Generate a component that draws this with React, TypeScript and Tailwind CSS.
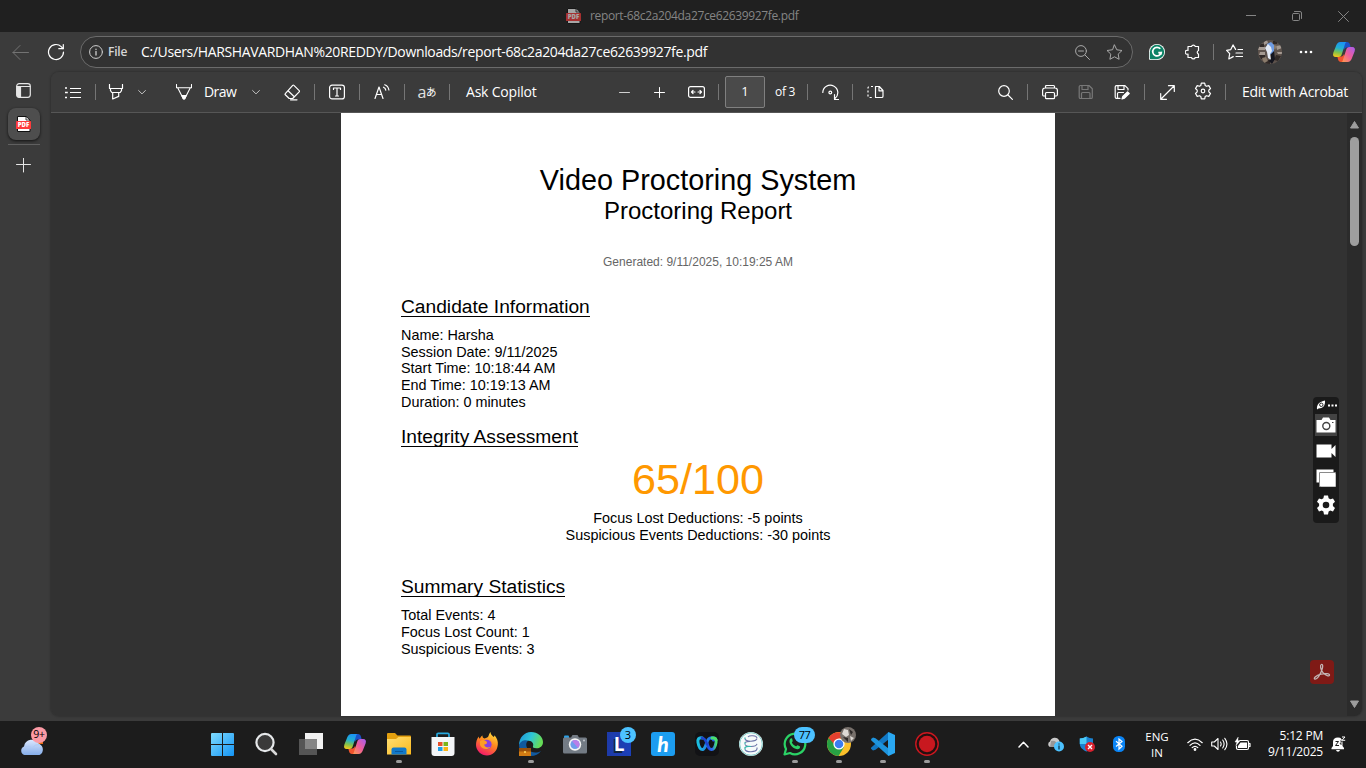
import React from "react";

type SvgProps = { w?: number; h?: number; className?: string; sw?: number; children: React.ReactNode };

function Glyph({ w = 16, h, className = "", sw = 1, children }: SvgProps) {
  const hh = h ?? w;
  return (
    <svg
      width={w}
      height={hh}
      viewBox={`0 0 ${w} ${hh}`}
      fill="none"
      stroke="currentColor"
      strokeWidth={sw}
      strokeLinecap="round"
      strokeLinejoin="round"
      className={`shrink-0 ${className}`}
    >
      {children}
    </svg>
  );
}

function Cell({ className, children }: { className: string; children?: React.ReactNode }) {
  return <div className={`flex h-full shrink-0 items-center justify-center ${className}`}>{children}</div>;
}

function Sep({ className = "" }: { className?: string }) {
  return <div className={`h-4 w-px shrink-0 bg-[#757575] ${className}`} />;
}

function PdfIcon({ dim = false }: { dim?: boolean }) {
  return (
    <svg width="16" height="16" viewBox="0 0 16 16" className={dim ? "shrink-0 opacity-60" : "shrink-0"}>
      <path d="M1.500.5h8.800L14 4v11.500H1.500z" fill="#fff" stroke="#111" />
      <path d="M10 .5V4h4z" fill="#fff" stroke="#111" strokeWidth=".8" />
      <rect x="0" y="5" width="15" height="8" rx=".6" fill="#ff3b3b" />
      <text x="7.500" y="11.200" fontSize="6" fontWeight="800" textAnchor="middle" fill="#fff" fontFamily="Open Sans, sans-serif">
        PDF
      </text>
    </svg>
  );
}

function Chevron() {
  return (
    <Glyph w={8} className="text-[#c4c4c4]">
      <path d="M.6 2.500 4 5.900l3.400-3.400" />
    </Glyph>
  );
}

function CopilotLogo({ size = 24, id }: { size?: number; id: string }) {
  return (
    <svg width={size} height={size} viewBox="0 0 24 24" className="shrink-0">
      <defs>
        <linearGradient id={`${id}a`} x1=".5" y1="0" x2=".3" y2="1">
          <stop offset="0" stopColor="#1b93f5" />
          <stop offset=".4" stopColor="#22b0d0" />
          <stop offset=".7" stopColor="#7fc24c" />
          <stop offset="1" stopColor="#f3c81b" />
        </linearGradient>
        <linearGradient id={`${id}b`} x1="1" y1="0" x2="0" y2="1">
          <stop offset="0" stopColor="#a45cf2" />
          <stop offset=".5" stopColor="#ee5d9a" />
          <stop offset="1" stopColor="#ffa04a" />
        </linearGradient>
      </defs>
      <path d="M15 2c1.600 0 2.500 1 3 2.800l.7 2.700h-3c-2 0-3 .5-3.700 2.500L10 4c-.4-1.200-.9-2-2-2z" fill="#1a50c8" />
      <path d="M9 22c-1.600 0-2.500-1-3-2.800l-.7-2.700h3c2 0 3-.5 3.700-2.500l2 6c.4 1.200.9 2 2 2z" fill="#f2542d" />
      <path d="M14.500 2H8.500C6 2 4.700 3.800 3.700 6.700L1.400 12.500C.4 15.500 1.500 17 3.800 17h2.700c1.900 0 2.700-1 3.300-2.800l2.400-7.400C13 4.200 13.300 2 14.500 2z" fill={`url(#${id}a)`} />
      <path d="M9.500 22h6c2.500 0 3.800-1.800 4.800-4.700l2.300-5.800c1-3-.1-4.500-2.400-4.500h-2.700c-1.900 0-2.700 1-3.300 2.800l-2.400 7.400C11 19.800 10.700 22 9.500 22z" fill={`url(#${id}b)`} />
    </svg>
  );
}

function TitleBar() {
  return (
    <header className="flex h-8 shrink-0 items-center bg-[#202020]">
      <div className="flex min-w-0 flex-1 items-center gap-2 pl-[566px]">
        <PdfIcon dim />
        <span className="text-[12px] leading-4 tracking-[-0.35px] whitespace-nowrap text-[#858585]">report-68c2a204da27ce62639927fe.pdf</span>
      </div>
      <Cell className="w-[46px] text-[#858585]">
        <Glyph w={10}><path d="M0 4.500h10" /></Glyph>
      </Cell>
      <Cell className="w-[46px] text-[#858585]">
        <Glyph w={10}>
          <rect x=".5" y="2.500" width="7" height="7" rx="1" />
          <path d="M2.500.5h5.500a1.500 1.500 0 0 1 1.500 1.500v5.500" />
        </Glyph>
      </Cell>
      <Cell className="w-[46px] text-[#858585]">
        <Glyph w={11}><path d="m.5.5 10 10M10.500.5l-10 10" /></Glyph>
      </Cell>
    </header>
  );
}

function AddressRow() {
  return (
    <div className="flex h-10 shrink-0 items-center">
      <Cell className="w-10 text-[#737373]">
        <Glyph w={17}><path d="M16.500 8.500H1M8 1.500 1 8.500l7 7" /></Glyph>
      </Cell>
      <Cell className="w-8 text-white">
        <Glyph w={18} sw={1.200}>
          <path d="M16.500 9A7.500 7.500 0 1 1 14.200 3.600L16 5.500" />
          <path d="M16.300 1.500v4.200h-4.500" />
        </Glyph>
      </Cell>
      <div className="ml-2 flex h-8 w-[1053px] shrink-0 items-center rounded-full border border-[#6b6b6b] bg-[#323232] pl-2">
        <Glyph w={14} className="text-[#cfcfcf]">
          <circle cx="7" cy="7" r="6.400" />
          <path d="M7 6.500v3.500M7 4.200v.2" strokeWidth="1.300" />
        </Glyph>
        <span className="ml-[5px] w-[33px] text-[12px] font-semibold tracking-[-0.2px] text-[#d6d6d6]">File</span>
        <span className="flex-1 text-[14px] leading-5 tracking-[-0.355px] whitespace-nowrap text-white">
          C:/Users/HARSHAVARDHAN%20REDDY/Downloads/report-68c2a204da27ce62639927fe.pdf
        </span>
        <Glyph w={15} className="mr-4 text-[#a8a8a8]">
          <circle cx="6" cy="6" r="5.400" />
          <path d="m10 10 4.500 4.500M3.500 6h5" />
        </Glyph>
        <Glyph w={17} className="mr-[9px] text-[#a8a8a8]">
          <path d="m8.500 1 2.300 4.800 5.200.7-3.800 3.600.9 5.200-4.600-2.500-4.600 2.500.9-5.200L1 6.500l5.200-.7z" />
        </Glyph>
      </div>
      <Cell className="w-12">
        <svg width="16" height="16" viewBox="0 0 16 16">
          <path d="M8 0a8 8 0 1 1 0 16H1.500A1.500 1.500 0 0 1 0 14.500V8a8 8 0 0 1 8-8z" fill="#fff" />
          <path d="M8 .8a7.200 7.200 0 1 1 0 14.400H1.800a1 1 0 0 1-1-1V8A7.200 7.200 0 0 1 8 .8z" fill="#0b8265" />
          <path d="M11.300 4.800A4.300 4.300 0 1 0 12.200 8.700H9.300" fill="none" stroke="#fff" strokeWidth="1.700" />
          <path d="m9.800 10 2.800-2.600v3.400z" fill="#fff" />
        </svg>
      </Cell>
      <Cell className="w-6 text-white">
        <Glyph w={16} sw={1.200}>
          <path d="M5 2.500H6.500a2 2 0 0 1 3.800 0H13.500v4M5 2.500H3v3.900a2 2 0 1 0 0 3.700v3.400h3.500a1.900 1.900 0 0 0 3.700 0h3.300v-3.400a1.900 1.900 0 0 1 0-3.600" />
        </Glyph>
      </Cell>
      <Sep className="ml-2 bg-[#6a6a6a]" />
      <Cell className="w-10 text-white">
        <Glyph w={17} sw={1.200}>
          <path d="M9.600 5.400 7 .9 4.800 5.600l-4.200.7 3.100 3.400-.9 5.300 4.400-2.400M12 5.500h4.500M10 9h6.500M10 12.500h6.500" />
        </Glyph>
      </Cell>
      <Cell className="w-8">
        <svg width="24" height="24" viewBox="0 0 24 24">
          <defs><clipPath id="avatar"><circle cx="12" cy="12" r="12" /></clipPath></defs>
          <g clipPath="url(#avatar)">
            <path fill="#5d524c" d="M0 0h24v24H0z" />
            <path fill="#a59a92" d="M0 7h7v3H0zM2 12h5v3H1zM6 2l3-2 1 3-4 2zM18 6l6-1v3l-5 2zM19 12h5v2h-4z" />
            <path fill="#302927" d="M1 15h6v4H3zM18 15l5 1-3 5-4-1zM8 20h4v4H7zM2 4h4v3H2zM15 1h4v3h-4z" />
            <path fill="#8a7b6b" d="M4 18l4-1 2 4-4 2zM16 5l3 1-2 4-2-3z" />
            <path fill="#6f9be2" d="M9 4l4-2 3 3v7l-3 3-4-5z" />
            <path fill="#e4eaf5" d="m7 8 3-4 3 3 1 4-2 3 1 6-3-2-1-6z" />
            <path fill="#15161f" d="m13 14 3-3 1 8-3 5-3-3 2-2z" />
          </g>
        </svg>
      </Cell>
      <Cell className="w-10 text-white">
        <Glyph w={14} h={4}>
          <g fill="currentColor" stroke="none"><circle cx="2" cy="2" r="1.300" /><circle cx="7" cy="2" r="1.300" /><circle cx="12" cy="2" r="1.300" /></g>
        </Glyph>
      </Cell>
      <Cell className="w-9"><CopilotLogo id="top" size={24} /></Cell>
    </div>
  );
}

function PdfToolbar() {
  return (
    <div className="flex h-[41px] shrink-0 items-center border-b border-[#565656] bg-[#3b3b3b] text-white">
      <Cell className="w-11">
        <Glyph w={16} h={13} sw={1}>
          <path d="M5 2.500h11M5 6.500h11M5 11.500h11" strokeLinecap="butt" />
          <path d="M0 2h2M0 6.500h2M3 6.500h-.8M0 11.500h2" strokeLinecap="butt" strokeWidth="1.600" />
        </Glyph>
      </Cell>
      <Sep />
      <Cell className="w-10">
        <Glyph w={16} sw={1.200}>
          <path d="M1.500.5v4h13v-4M2.500 4.500v2.200l1.300 1.800h8.400l1.300-1.800V4.500M4.700 8.500v6.500l6-2.600V8.500" />
        </Glyph>
      </Cell>
      <Cell className="w-3"><Chevron /></Cell>
      <Cell className="ml-7 w-4">
        <Glyph w={16} sw={1.100}>
          <path d="M.5.5v3.300h15V.5M1.700 3.800l5.600 11h1.400l5.600-11" />
          <path d="M5.800 11.500h4.400L8.600 15H7.400z" fill="currentColor" />
        </Glyph>
      </Cell>
      <span className="ml-3 w-12 text-[14px] leading-5 tracking-[-0.55px]">Draw</span>
      <Cell className="w-2"><Chevron /></Cell>
      <Cell className="w-[54px] pl-[10px]">
        <Glyph w={17} sw={1.200}>
          <path d="m9.900 1.300 5.300 5.300q.6.600 0 1.200L8.700 14.500H5.200L1.300 10.800q-.6-.6 0-1.200l7.400-8.300q.6-.6 1.200 0zM4.300 7l6 5.700M6.500 15.800h6.500" />
        </Glyph>
      </Cell>
      <Sep />
      <Cell className="w-11">
        <Glyph w={16} sw={1.200}>
          <rect x=".6" y="1.100" width="14.800" height="13.800" rx="2.500" />
          <path d="M4.500 5.500v-1.500h7v1.500M8 4v8M6.500 12h3" />
        </Glyph>
      </Cell>
      <Sep />
      <Cell className="w-11">
        <Glyph w={16} sw={1.200}>
          <path d="M1 14.500 5 3l4 11.500M2.500 10.500h5M9.500 3.200q2 .8 2.300 3M10.700.8q3.500 1.200 4.200 5.200" />
        </Glyph>
      </Cell>
      <Sep />
      <Cell className="w-11">
        <span className="text-[16px] leading-4 tracking-[-0.5px] text-[#e0e0e0]">a</span>
        <span className="font-['Noto_Sans_CJK_JP',sans-serif] text-[10.500px] leading-4 text-white">あ</span>
      </Cell>
      <Sep />
      <span className="w-[158px] pl-4 text-[14px] leading-5 tracking-[-0.2px] whitespace-nowrap">Ask Copilot</span>
      <Cell className="w-8 text-[#d0d0d0]"><Glyph w={11}><path d="M.5 5.500h10" /></Glyph></Cell>
      <Cell className="w-[38px]"><Glyph w={11}><path d="M.5 5.500h10M5.500.5v10" /></Glyph></Cell>
      <Cell className="w-[37px]">
        <Glyph w={17} h={12} sw={1.200}>
          <rect x=".6" y=".6" width="15.800" height="10.800" rx="2" />
          <path d="M3.500 6h3.500M10 6h3.500M5 4.500 3.500 6 5 7.500M12 4.500 13.500 6 12 7.500" />
        </Glyph>
      </Cell>
      <Sep className="ml-[3px]" />
      <div className="ml-[6px] flex h-8 w-10 shrink-0 items-center justify-center rounded-[2px] border border-[#808080] bg-[#4a4a4a] text-[13px]">1</div>
      <span className="ml-[10px] w-8 text-[12px] tracking-[-0.3px] whitespace-nowrap">of 3</span>
      <Sep />
      <Cell className="w-11">
        <Glyph w={17} sw={1.200}>
          <path d="M1 8.500a7.300 7.300 0 1 1 11.500 5.500M12 10.500v4.500h4.300" className="hidden" />
          <path d="M1 9.500A7.500 7.500 0 1 1 13.500 14M11.500 15.500h4M13.500 11v4" className="hidden" />
          <path d="M.8 8.500a7.500 7.500 0 1 1 12.200 6M12.500 10.500v5h4.200" />
          <circle cx="8.300" cy="8.500" r="1.400" />
        </Glyph>
      </Cell>
      <Sep />
      <Cell className="w-11">
        <Glyph w={17} h={14} sw={1.200}>
          <path d="M8.500 1.500v11h6.200q1.300 0 1.300-1.300V5.500L12.300 1.500zM12 1.800v4h4" />
          <path d="M6 1.500H3Q1 1.500 1 3v8.500q0 1 2 1h3" strokeDasharray="2 2" strokeLinecap="butt" />
        </Glyph>
      </Cell>
      <div className="flex-1" />
      <Cell className="w-11">
        <Glyph w={15} sw={1.200}><circle cx="6" cy="6" r="5.300" /><path d="m10 10 4.400 4.400" /></Glyph>
      </Cell>
      <Sep />
      <Cell className="w-11">
        <Glyph w={16} sw={1.200}>
          <path d="M3.500 4V2.500q0-1 1-1h7q1 0 1 1V4M3.500 12H1.800Q.6 12 .6 10.500V6.500Q.6 4 3 4h10q2.400 0 2.400 2.500v4q0 1.500-1.200 1.500h-1.700" />
          <rect x="3.500" y="8.500" width="9" height="6.200" rx="1" />
        </Glyph>
      </Cell>
      <Cell className="w-7 text-[#787878]"><SaveGlyph /></Cell>
      <Cell className="w-11"><SaveGlyph pen /></Cell>
      <Sep />
      <Cell className="w-11">
        <Glyph w={15} sw={1.200}><path d="M14 1 1 14M8.500.7h5.800v5.800M.7 8.500v5.800h5.800" /></Glyph>
      </Cell>
      <Cell className="w-7">
        <Glyph w={18} sw={1.200} className="mb-0.5">
          <path d="M7.300 1.200h3.400l.5 2.300 1.300.8 2.300-.7 1.700 2.900-1.700 1.700v1.600l1.700 1.700-1.700 2.900-2.300-.7-1.300.8-.5 2.300H7.300l-.5-2.300-1.300-.8-2.300.7-1.700-2.900 1.700-1.700V8.200L1.500 6.500l1.700-2.900 2.300.7 1.300-.8z" />
          <circle cx="9" cy="9" r="1.800" />
        </Glyph>
      </Cell>
      <Sep className="ml-2" />
      <span className="ml-4 w-[120px] text-[14px] leading-5 tracking-[-0.3px] whitespace-nowrap">Edit with Acrobat</span>
    </div>
  );
}

function SaveGlyph({ pen = false }: { pen?: boolean }) {
  return (
    <Glyph w={16} sw={1.200}>
      {pen ? (
        <>
          <path d="M6 14.400H2.500q-1.300 0-1.300-1.300V2.900q0-1.300 1.300-1.300h8.500l3 3V6M4 1.800v3.700h6V1.800M3.500 14V9.500q0-1 1-1h5" />
          <path d="m8 15 .8-2.500 4.700-4.700 1.700 1.700-4.700 4.700z" fill="currentColor" />
        </>
      ) : (
        <path d="M2.500 1.500h8.500l3.300 3.200v8.500q0 1.300-1.300 1.300H2.500q-1.300 0-1.300-1.300V2.800q0-1.300 1.300-1.300zM4 1.500v4h6v-4M3.500 14.500v-5q0-1 1-1h6.500q1 0 1 1v5" />
      )}
    </Glyph>
  );
}

function SideTabs() {
  return (
    <aside className="flex w-[51px] shrink-0 flex-col pl-2">
      <div className="mt-[11px] flex w-[31px] justify-center text-[#e6e6e6]">
        <Glyph w={15} sw={1.200}>
          <rect x=".7" y=".7" width="13.600" height="13.600" rx="2.500" />
          <path d="M1 3.500h13" />
          <path d="M1 3.500h3.500v10.500H2.500Q1 14 1 12z" fill="currentColor" />
        </Glyph>
      </div>
      <div className="mt-[10px] flex size-8 items-center justify-center rounded-lg bg-[#4e4e4e] shadow-[0_1px_3px_rgba(0,0,0,0.7)]">
        <PdfIcon />
      </div>
      <div className="mt-1 h-px w-8 bg-[#606060]" />
      <div className="mt-[13px] flex w-[31px] justify-center text-[#e6e6e6]">
        <Glyph w={15}><path d="M.5 6.500h14M7.500 0v14" /></Glyph>
      </div>
    </aside>
  );
}

function ReportHeading({ children, className = "" }: { children: React.ReactNode; className?: string }) {
  return (
    <h2 className={`text-[19.2px] leading-[22px] ${className}`}>
      <span className="inline-block h-[21px] border-b border-black leading-[22px]">{children}</span>
    </h2>
  );
}

function ReportPage() {
  return (
    <article className="h-full w-[714px] shrink-0 bg-white px-[60px] pt-[50px] font-['Liberation_Sans',Arial,sans-serif] text-[14.4px] leading-[16.65px] text-black">
      <h1 className="h-[34px] text-center text-[28.8px] leading-[34px] whitespace-nowrap">Video Proctoring System</h1>
      <p className="text-center text-[24px] leading-7">Proctoring Report</p>
      <p className="mt-[30px] text-center text-[12px] leading-[14px] text-[#666666]">Generated: 9/11/2025, 10:19:25 AM</p>
      <ReportHeading className="mt-[27px] h-[22px]">Candidate Information</ReportHeading>
      <div className="mt-[9px] h-[84px]">
        <p>Name: Harsha</p>
        <p>Session Date: 9/11/2025</p>
        <p>Start Time: 10:18:44 AM</p>
        <p>End Time: 10:19:13 AM</p>
        <p>Duration: 0 minutes</p>
      </div>
      <ReportHeading className="mt-[15px] h-[22px]">Integrity Assessment</ReportHeading>
      <p className="mt-[6px] text-center text-[43.2px] leading-[50px] text-[#ff9800]">65/100</p>
      <div className="mt-[6px] h-[33px] text-center">
        <p>Focus Lost Deductions: -5 points</p>
        <p>Suspicious Events Deductions: -30 points</p>
      </div>
      <ReportHeading className="mt-[33px] h-[22px]">Summary Statistics</ReportHeading>
      <div className="mt-[9px] leading-[17px]">
        <p>Total Events: 4</p>
        <p>Focus Lost Count: 1</p>
        <p>Suspicious Events: 3</p>
      </div>
    </article>
  );
}

function CaptureWidget() {
  return (
    <div className="absolute top-[397px] left-[1313px] flex h-[126px] w-[26px] flex-col items-center rounded bg-[#1a1a1a] text-white">
      <div className="flex h-[17px] items-center gap-[2px] pb-px">
        <svg width="10" height="10" viewBox="0 0 10 10">
          <path d="M1 9.500C.3 4.500 3.500 1.500 9 .5 9.500 5.500 7 8.500 2.500 8.500z" fill="#fff" />
          <circle cx="5.300" cy="4.800" r="1.700" fill="none" stroke="#1a1a1a" strokeWidth=".9" />
        </svg>
        <svg width="9" height="3" viewBox="0 0 9 3" fill="#fff"><path d="M0 .5h2v2H0zM3.500.5h2v2h-2zM7 .5h2v2H7z" /></svg>
      </div>
      <div className="flex size-[22px] items-center justify-center bg-[#434343] pr-px pb-px">
        <svg width="20" height="16" viewBox="0 0 20 16">
          <path d="M.5 3h5l1.500-2.500h6L14.500 3h5v12.500H.5z" fill="#fff" />
          <circle cx="10.300" cy="9" r="3.500" fill="none" stroke="#434343" strokeWidth="1.400" />
          <path d="M16 5h1.500v1H16z" fill="#434343" />
        </svg>
      </div>
      <svg width="20" height="14" viewBox="0 0 20 14" fill="#fff" className="mt-2 mr-px">
        <path d="M.5.500h15v4.500L19.500 1v12l-4-4v4.500H.5z" />
      </svg>
      <svg width="20" height="18" viewBox="0 0 20 18" className="mt-[11px] mr-px">
        <path d="M.5.5h17v13H.5z" fill="#fff" />
        <path d="M3.500 3.500h16v14h-16z" fill="#fff" stroke="#8a8a8a" />
        <path d="M4.500 4.500h15v13h-15z" fill="#fff" />
      </svg>
      <svg width="20" height="20" viewBox="0 0 20 20" fill="#fff" className="mt-2 mr-px">
        <path fillRule="evenodd" d="M8 .5h4l.6 2.800 1.700 1 2.700-.9 2 3.400-2.100 1.900v2.200L19 12.900l-2 3.500-2.700-.9-1.700 1-.6 2.900H8l-.6-2.900-1.700-1-2.700.9-2-3.500 2.100-2V8.700L1 6.800l2-3.400 2.700.9 1.700-1zM10 6.700a3.300 3.300 0 1 0 0 6.600 3.300 3.300 0 0 0 0-6.600z" />
      </svg>
    </div>
  );
}

function Viewer() {
  return (
    <main className="relative flex min-h-0 flex-1 bg-[#323232]">
      <div className="w-[290px] shrink-0" />
      <ReportPage />
      <div className="flex-1" />
      <div className="flex w-[15px] flex-col items-center bg-[#2b2b2b]">
        <svg width="9" height="8" viewBox="0 0 9 8" className="mt-2"><path d="M4.500.5 8.500 7H.5z" fill="#9d9d9d" stroke="#9d9d9d" strokeLinejoin="round" /></svg>
        <div className="mt-2 h-[109px] w-[9px] rounded-full bg-[#9e9e9e]" />
        <div className="flex-1" />
        <svg width="9" height="8" viewBox="0 0 9 8" className="mb-2"><path d="M4.500 7.500.5 1h8z" fill="#9d9d9d" stroke="#9d9d9d" strokeLinejoin="round" /></svg>
      </div>
    </main>
  );
}

function AcrobatBadge() {
  return (
    <div className="absolute top-[660px] left-[1310px] flex size-6 items-center justify-center rounded bg-[#7f1a16] text-[#c4b5b4]">
      <Glyph w={18} sw={1.300}>
        <path d="M8.300 1.500c1.800-.6 1.800 2.500.3 6.300-1.500 4-4.500 8.500-6.600 8.300-2-.5.5-3.600 6-4.900 4.500-1 8.600-.6 8.500 1-.2 1.400-3.700.6-6.500-2.600C7.300 6.400 7 2 8.300 1.500z" />
      </Glyph>
    </div>
  );
}

function Svg24({ children }: { children: React.ReactNode }) {
  return <svg width="24" height="24" viewBox="0 0 24 24" className="shrink-0">{children}</svg>;
}

function StartLogo() {
  return (
    <Svg24>
      <defs><linearGradient id="win" x1="0" y1="0" x2="1" y2="1"><stop offset="0" stopColor="#7fdcff" /><stop offset="1" stopColor="#1494f5" /></linearGradient></defs>
      <path fill="url(#win)" d="M1 1h21a1 1 0 0 1 1 1v21a1 1 0 0 1-1 1H1a1 1 0 0 1-1-1V2a1 1 0 0 1 1-1z" />
      <path stroke="#1c1c1c" d="M11.500 0v24M0 12.500h24" />
    </Svg24>
  );
}

function SearchLogo() {
  return <Svg24><circle cx="10" cy="10.500" r="8.600" fill="#3a3a3a" stroke="#e6e8ea" strokeWidth="2.200" /><path d="m16.500 17.500 4.500 4.500" stroke="#d8d8d8" strokeWidth="2.600" strokeLinecap="round" /></Svg24>;
}

function TaskViewLogo() {
  return <Svg24><path d="M6 1h18v16H6z" fill="#f2f2f2" /><path d="M0 7h18v16H0z" fill="#5d5d5d" fillOpacity=".88" /><path d="M6 7h12v10H6z" fill="#858585" /></Svg24>;
}

function FolderLogo() {
  return (
    <Svg24>
      <defs><linearGradient id="fold" x1="0" y1="0" x2="1" y2="1"><stop offset="0" stopColor="#ffdf74" /><stop offset="1" stopColor="#fcb91c" /></linearGradient></defs>
      <path d="M0 2a1 1 0 0 1 1-1h7l2.500 2.500H23a1 1 0 0 1 1 1V12H0z" fill="#e3a00f" />
      <path d="M0 7h9l2.500-2H24v17.500H0z" fill="url(#fold)" />
      <path d="M4.500 22.500v-5q0-2 2-2h11q2 0 2 2v5z" fill="#1279c9" /><path d="M8 19.500h8" stroke="#0a589c" />
    </Svg24>
  );
}

function StoreLogo() {
  return (
    <Svg24>
      <path d="M6 6V2.500q0-1.200 1.200-1.200h9.600q1.200 0 1.200 1.200V6" fill="none" stroke="#27a9df" strokeWidth="1.700" />
      <path d="M.5 5h23v16q0 3-3 3h-17q-3 0-3-3z" fill="#f4f6f8" />
      <path d="M7 10h4.500v4H7z" fill="#e8502b" /><path d="M12.500 10H17v4h-4.500z" fill="#7bb51c" /><path d="M7 15h4.500v4H7z" fill="#1f9fe8" /><path d="M12.500 15H17v4h-4.500z" fill="#fbb516" />
    </Svg24>
  );
}

function FirefoxLogo() {
  return (
    <Svg24>
      <defs><linearGradient id="fx" x1=".8" y1="0" x2=".3" y2="1"><stop offset="0" stopColor="#ffe23e" /><stop offset=".45" stopColor="#ff8a1f" /><stop offset="1" stopColor="#f5156c" /></linearGradient></defs>
      <path d="M15.500 0c0 2.200 1.500 3.300 3 5 .8-.4 1-1 1-1.700 2.500 2.700 3.700 6 3.300 9.500C22.200 19.300 17.600 23.500 12 23.500S1 18.700 1 13c0-3.200.8-6 2.700-8.500.1 1 .4 1.700 1 2.200C5.500 5.200 6.400 4 7.500 3.500c-.2 1.500.5 2.500 2 3 2.300-.4 3.300-1.200 4-2.500.5-1.200.9-2.600 2-4z" fill="url(#fx)" />
      <circle cx="11.800" cy="12.500" r="4.800" fill="#8a3fe0" /><path d="M5 9c3-2 5-1 6.500.5 1.300 1.500 0 3-2.500 3 1 3 4 3.700 6.500 2-1.200 3.300-8.500 4-10.500-1.500z" fill="#ff9d25" />
    </Svg24>
  );
}

function EdgeLogo() {
  return (
    <Svg24>
      <defs><linearGradient id="edge" x1="0" y1="0" x2="1" y2=".3"><stop offset="0" stopColor="#1c91d8" /><stop offset=".55" stopColor="#2fc6d6" /><stop offset="1" stopColor="#66dc58" /></linearGradient></defs>
      <path d="M0 13C.3 5.500 5.300 0 12 0c6.800 0 12 4.700 12 10 0 4-3 6.300-6.500 6.300-3 0-4-1-3.500-2 1-2.300-.7-5.500-4.300-5.500C5 8.800 2 11 0 13z" fill="url(#edge)" />
      <path d="M0 13C2 7.800 7 7.500 9.500 8.800 6.500 10 6.700 14.500 9 17.300c3 3.500 8.500 4.300 13 1.700-2.300 3.300-6 5-10 5C5 24 0 19 0 13z" fill="#11599e" />
      <path d="M0 16h12v8H0z" fill="#d17b13" /><path d="M0 16h12v3.500H0z" fill="#99500b" /><circle cx="6" cy="20" r="1" fill="#ffda5f" />
    </Svg24>
  );
}

function CameraLogo() {
  return (
    <Svg24>
      <path d="M1 6V4.500q0-1 1-1h3q1 0 1 1V6z" fill="#2ca2e8" />
      <path d="M8 5.500 9.500 3h5L16 5.500h6.500A1.500 1.500 0 0 1 24 7v13a1.500 1.500 0 0 1-1.500 1.500h-21A1.500 1.500 0 0 1 0 20V7a1.500 1.500 0 0 1 1.500-1.500z" fill="#737b84" />
      <circle cx="12" cy="12.500" r="6.200" fill="#f5f5f5" /><circle cx="12" cy="12.500" r="4.600" fill="#6f9cec" /><path d="M9 9a4.600 4.600 0 0 1 6 7z" fill="#b97ee8" /><circle cx="21" cy="8.500" r="1" fill="#c4c9cf" />
    </Svg24>
  );
}

function LetterL() {
  return (
    <div className="flex size-6 items-center justify-center bg-[linear-gradient(90deg,#1d3aa8,#1b40b8)] font-['Open_Sans',sans-serif] text-[19px] leading-6 font-bold text-white [text-shadow:-1.500px_1.500px_0_#10243c]">
      L
    </div>
  );
}

function LetterH() {
  return <div className="flex size-6 items-center justify-center rounded-[3px] bg-[#1c9df0] font-['Lato',sans-serif] text-[21px] leading-6 font-black text-white italic">h</div>;
}

function WebexLogo() {
  return (
    <Svg24>
      <defs>
        <linearGradient id="wbx"><stop offset="0" stopColor="#1bc0e0" /><stop offset="1" stopColor="#2359ee" /></linearGradient>
        <linearGradient id="wbx2"><stop offset="0" stopColor="#2048d8" /><stop offset=".6" stopColor="#2a6df0" /><stop offset="1" stopColor="#46e070" /></linearGradient>
      </defs>
      <rect width="24" height="24" rx="5" fill="#121215" />
      <path d="M16.500 6c4-1 5 1.500 4.500 4.500-.7 4-2.300 7-4.500 7-2.500 0-3.700-3-4.300-6" fill="none" stroke="url(#wbx2)" strokeWidth="3" strokeLinecap="round" />
      <path d="M7.500 6C3.500 5 2.500 7.500 3 10.500c.7 4 2.300 7 4.500 7C11.500 17.500 11 6 15.500 6c1.500 0 3 .7 3 2" fill="none" stroke="url(#wbx)" strokeWidth="3" strokeLinecap="round" />
      <path d="M7 6c3 0 4 3 5 6.500" fill="none" stroke="#1e43cc" strokeWidth="2.600" strokeLinecap="round" />
      <path d="M17 6c2-.3 3.500.3 4 2" fill="none" stroke="#4ae06e" strokeWidth="3" strokeLinecap="round" />
    </Svg24>
  );
}

function DbLogo() {
  return (
    <Svg24>
      <circle cx="12" cy="12" r="12" fill="#f6fbfb" /><circle cx="12" cy="12" r="11.300" fill="none" stroke="#7cc9c6" />
      <path d="M6 7c1 3 11 3 12-.5M18 6c-.5-2.500-7.500-3-9-1M6 12.300c1 3 11 3 12-.5M6 10.500c.5-.5 3-1 5-1M6 17.500c1 3 11 3 12-.5M18 17v-1.500" fill="none" stroke="#6d74a8" strokeWidth="1.100" />
      <path d="M6 7V5.500M6 12.300v-2M6 17.500v-2c1-1 4-1.200 6-1" fill="none" stroke="#35b6ac" strokeWidth="1.200" />
    </Svg24>
  );
}

function WhatsAppLogo() {
  return (
    <Svg24>
      <path d="M1.500 22.500 3 17A10.300 10.300 0 1 1 7 21z" fill="#1c1c1c" stroke="#2bd366" strokeWidth="2.200" strokeLinejoin="round" />
      <path d="M8.700 6.300c.6 0 .9 2.200 1 2.700.1.500-1 1.200-.8 1.600.8 1.700 2.200 3 4 3.700.5.200 1.200-1.300 1.700-1.100.5.200 2.500 1 2.500 1.500 0 1.800-1.500 2.700-3 2.500C10 16.500 7 13 6.500 10 6.300 8 7.200 6.300 8.700 6.300z" fill="#2bd366" />
    </Svg24>
  );
}

function ChromeLogo() {
  return (
    <Svg24>
      <circle cx="12" cy="12" r="12" fill="#fbc02a" />
      <path d="M12 12 1.600 6a12 12 0 0 0 10 18L17 15z" fill="#27a043" />
      <path d="M1.600 6A12 12 0 0 1 22.400 6.500H12L7 12z" fill="#e4402f" />
      <circle cx="12" cy="12" r="5.600" fill="#fff" /><circle cx="12" cy="12" r="4.300" fill="#3a7df0" />
    </Svg24>
  );
}

function VsCodeLogo() {
  return (
    <Svg24>
      <path d="m17.500 7.500-13 10.200L2 18.500 0 16.800v-1L17.500 0z" fill="#1278c4" />
      <path d="M17.500 16.500 4.500 6.200 2 5.500.1 7v1.200L17.500 24z" fill="#1e94dd" />
      <path d="M17.500 0 24 3v18l-6.500 3q-.5-.5-.5-1V1q0-.5.500-1z" fill="#2aa8f2" />
    </Svg24>
  );
}

function RecordLogo() {
  return <Svg24><circle cx="12" cy="12" r="11.200" fill="#241010" stroke="#cc171f" strokeWidth="1.400" /><circle cx="12" cy="12" r="8.200" fill="#c8181f" /></Svg24>;
}

function TaskItem({ children, open = false, badge }: { children: React.ReactNode; open?: boolean; badge?: React.ReactNode }) {
  return (
    <div className="relative flex h-full w-11 shrink-0 flex-col items-center pt-[11px]">
      {children}
      {open && <div className="mt-1 h-[3px] w-1.5 rounded-full bg-[#9b9b9b]" />}
      {badge}
    </div>
  );
}

function Taskbar() {
  return (
    <footer className="flex h-[47px] shrink-0 bg-[#1c1c1c] text-white">
      <div className="relative w-[201px] shrink-0">
        <svg width="26" height="18" viewBox="0 0 26 18" className="absolute top-[17px] left-5">
          <defs><linearGradient id="cloud" x1="0" y1="0" x2="0" y2="1"><stop offset="0" stopColor="#dbe8ff" /><stop offset="1" stopColor="#86aeea" /></linearGradient></defs>
          <path d="M17 0h6v6h-6z" fill="#e76b12" />
          <path d="M4.500 17A4.500 4.500 0 0 1 4 8.500 8 8 0 0 1 19 6a6 6 0 0 1 .5 11z" fill="url(#cloud)" />
          <path d="M4 9q5-2 8 1 3-4 8-3.500" fill="none" stroke="#b0caf4" />
        </svg>
        <div className="absolute top-[6px] left-[31px] flex size-4 items-center justify-center rounded-full bg-[#fb9aa5] text-[10.500px] tracking-[-0.3px] text-black">9+</div>
      </div>
      <TaskItem><StartLogo /></TaskItem>
      <TaskItem><SearchLogo /></TaskItem>
      <TaskItem><TaskViewLogo /></TaskItem>
      <TaskItem><CopilotLogo id="task" size={24} /></TaskItem>
      <TaskItem open><FolderLogo /></TaskItem>
      <TaskItem><StoreLogo /></TaskItem>
      <TaskItem><FirefoxLogo /></TaskItem>
      <TaskItem open><EdgeLogo /></TaskItem>
      <TaskItem><CameraLogo /></TaskItem>
      <TaskItem badge={<div className="absolute top-[6px] left-[23px] flex size-4 items-center justify-center rounded-full bg-[#4cc2ff] text-[11px] text-black">3</div>}><LetterL /></TaskItem>
      <TaskItem><LetterH /></TaskItem>
      <TaskItem><WebexLogo /></TaskItem>
      <TaskItem><DbLogo /></TaskItem>
      <TaskItem open badge={<div className="absolute top-[6px] left-[21px] flex h-4 w-[21px] items-center justify-center rounded-full bg-[#4cc2ff] text-[11px] tracking-[-0.5px] text-black">77</div>}><WhatsAppLogo /></TaskItem>
      <TaskItem
        open
        badge={
          <svg width="16" height="16" viewBox="0 0 16 16" className="absolute top-[6px] left-[23px]">
            <circle cx="8" cy="8" r="8" fill="#77706b" /><path d="M4 2l4 1 1 5-3 2-4-3zM10 9l4 2-3 3z" fill="#ddd9d5" /><path d="M9 2l4 3-2 3zM3 10l5 1v4z" fill="#2c2827" />
          </svg>
        }
      >
        <ChromeLogo />
      </TaskItem>
      <TaskItem open><VsCodeLogo /></TaskItem>
      <TaskItem open><RecordLogo /></TaskItem>
      <div className="flex-1" />
      <div className="flex h-[46px] w-[359px] shrink-0 items-center">
        <Cell className="w-8"><Glyph w={11} h={7} sw={1.500}><path d="m1 6 4.500-4.700L10 6" /></Glyph></Cell>
        <Cell className="w-8">
          <svg width="17" height="15" viewBox="0 0 17 15"><path d="M3 10A3 3 0 0 1 3 4.500 5 5 0 0 1 12 3l2 7z" fill="#c9c9c9" /><path d="M4 4q3-1 5 1l2 5H3z" fill="#969696" /><circle cx="12" cy="9.500" r="5" fill="#4cc2ff" /><path d="M12 8.500v4M12 6.500v1" stroke="#12384c" strokeWidth="1.300" /></svg>
        </Cell>
        <Cell className="w-8">
          <svg width="16" height="16" viewBox="0 0 16 16"><path d="M7.500.5q3 2 6.500 2v5c0 4-3 6.500-6.500 8C4 14 .8 11.500.8 7.500v-5q3.500 0 6.700-2z" fill="#1b82d1" /><path d="M7.500.5v7.500H.8V2.500q3.500 0 6.700-2z" fill="#4ccaf7" /><circle cx="11" cy="11" r="5" fill="#d9202e" /><path d="m9 9 4 4M13 9l-4 4" stroke="#fff" strokeWidth="1.300" /></svg>
        </Cell>
        <Cell className="w-8">
          <svg width="12" height="16" viewBox="0 0 12 16"><rect width="12" height="16" rx="5.500" fill="#0a84f5" /><path d="m3 5.200 6 5L6 13V3l3 2.500-6 5" fill="none" stroke="#fff" strokeWidth="1.200" /></svg>
        </Cell>
        <div className="ml-[5px] w-[34px] pt-px text-center text-[11.500px] leading-4">
          <p>ENG</p>
          <p>IN</p>
        </div>
        <Cell className="ml-[9px] w-6">
          <Glyph w={16} h={13} sw={1.200}><path d="M.8 4.700q7.200-7 14.400 0M3 7.300q5-5 10 0M5.200 9.700q2.800-2.800 5.600 0" /><circle cx="8" cy="11.500" r=".8" fill="currentColor" /></Glyph>
        </Cell>
        <Cell className="w-6">
          <Glyph w={17} h={14} sw={1.100}><path d="M.7 5v4h2.600L7 12.500v-11L3.300 5zM9.500 5q1.300 2 0 4M11.700 3q2.800 4 0 8M13.800 1.300q4.300 5.700 0 11.400" /></Glyph>
        </Cell>
        <Cell className="w-6">
          <Glyph w={17} h={14} sw={1.200} className="mr-0.5"><path d="M6 3.500h7q1.500 0 1.500 1.500v6q0 1.500-1.500 1.500H4q-1.500 0-1.500-1.500V9M14.500 6.500H16v3h-1.500" /><path d="M4 9 6.500 5.500h6.500V11H4z" fill="currentColor" stroke="none" /><path d="M4 .5 1 5h2L2 8.500 6 3.700H4z" fill="currentColor" strokeWidth=".5" /></Glyph>
        </Cell>
        <div className="w-[68px] text-right text-[12px] leading-4 tracking-[-0.200px] whitespace-nowrap">
          <p>5:12 PM</p>
          <p>9/11/2025</p>
        </div>
        <Cell className="ml-[7px] w-[16px]">
          <svg width="15" height="16" viewBox="0 0 15 16"><path d="M2 6q0-4.500 5-4.500 4.500 0 4.500 4.500V10l1.500 2v1.200H.5V12L2 10zM5 14h4q-.5 1.700-2 1.700T5 14z" fill="#fff" /><path d="M4.500 5.500h3l-3 4h3.500" fill="none" stroke="#1c1c1c" /><path d="M9 5h2L9 8h2" fill="none" stroke="#1c1c1c" strokeWidth=".8" /><path d="M9.500 0h5v5.500h-3z" fill="#1c1c1c" /><path d="M11 1h3l-3 3.300h3.200" fill="none" stroke="#fff" /></svg>
        </Cell>
      </div>
    </footer>
  );
}

export default function App() {
  return (
    <div className="relative flex h-[768px] w-[1366px] flex-col overflow-hidden bg-[#3b3b3b] font-['Open_Sans','Noto_Sans',sans-serif] text-white">
      <TitleBar />
      <AddressRow />
      <div className="flex min-h-0 flex-1">
        <SideTabs />
        <section className="mb-[5px] flex min-w-0 flex-1 flex-col overflow-hidden rounded-lg shadow-[0_0_2px_1px_rgba(0,0,0,0.18)]">
          <PdfToolbar />
          <Viewer />
        </section>
        <div className="w-1 shrink-0" />
      </div>
      <Taskbar />
      <CaptureWidget />
      <AcrobatBadge />
    </div>
  );
}
